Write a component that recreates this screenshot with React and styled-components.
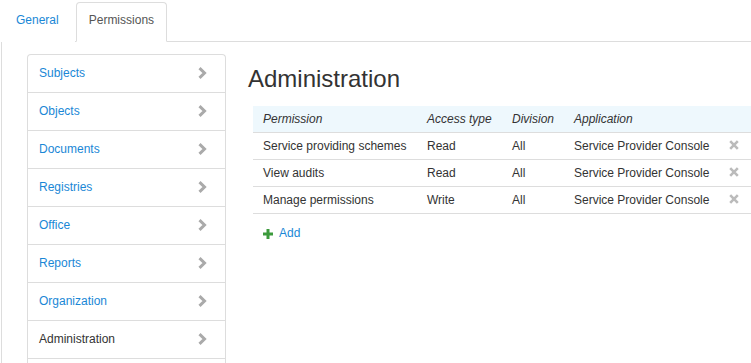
import styled, { createGlobalStyle } from "styled-components";

const GlobalStyle = createGlobalStyle`
  html, body {
    margin: 0;
    padding: 0;
    overflow: hidden;
    background: #ffffff;
  }
  body {
    font-family: "Liberation Sans", Arial, sans-serif;
    font-size: 12px;
    color: #333333;
  }
`;

const Tabs = styled.ul`
  display: flex;
  align-items: flex-end;
  list-style: none;
  margin: 0;
  padding: 2px 0 0 0;
`;

const Tab = styled.li`
  position: relative;
  z-index: 1;
  box-sizing: border-box;
  height: 40px;
  margin-bottom: -1px;
  margin-right: 1px;
  padding: 9px ${(p) => (p.$active ? "12px" : "15px")} 0;
  line-height: 17px;
  color: ${(p) => (p.$active ? "#555555" : "#1a87d6")};
  background: #ffffff;
  border: 1px solid ${(p) => (p.$active ? "#dddddd" : "transparent")};
  border-bottom-color: transparent;
  border-radius: 4px 4px 0 0;
  cursor: pointer;
`;

const Panel = styled.div`
  display: flex;
  align-items: flex-start;
  margin-left: 1px;
  padding: 12px 0 0 25px;
  border-top: 1px solid #dddddd;
  border-left: 1px solid #dddddd;
  min-height: 330px;
`;

const SideNav = styled.ul`
  flex: none;
  width: 199px;
  box-sizing: border-box;
  list-style: none;
  margin: 0;
  padding: 0 0 20px 0;
  border: 1px solid #dddddd;
  border-bottom: none;
  border-radius: 4px 4px 0 0;
`;

const SideItem = styled.li`
  box-sizing: border-box;
  display: flex;
  align-items: center;
  justify-content: space-between;
  height: 38px;
  padding: 0 18px 2px 11px;
  border-bottom: 1px solid #dddddd;
  color: ${(p) => (p.$active ? "#333333" : "#1a87d6")};
  cursor: pointer;
`;

const Main = styled.div`
  flex: none;
  padding: 12px 0 0 22px;
`;

const Title = styled.h2`
  margin: 0 0 14px 0;
  font-size: 24px;
  font-weight: normal;
  line-height: 26px;
  color: #333333;
`;

const Table = styled.table`
  width: 520px;
  margin-left: 5px;
  border-collapse: collapse;
  table-layout: fixed;
`;

const HeadCell = styled.th`
  height: 26px;
  padding: 0 0 0 10px;
  text-align: left;
  font-style: italic;
  font-weight: normal;
  background: #eef8fd;
  border-bottom: 1px solid #dddddd;
`;

const Cell = styled.td`
  height: 26px;
  padding: 0 0 0 10px;
  white-space: nowrap;
  border-bottom: 1px solid #dddddd;
`;

const AddLink = styled.a`
  display: inline-flex;
  align-items: center;
  gap: 6px;
  margin: 11px 0 0 15px;
  line-height: 17px;
  color: #1a87d6;
  text-decoration: none;
  cursor: pointer;
`;

const Chevron = () => (
  <svg width="9" height="12" viewBox="0 0 9 12">
    <polyline points="1.5,1.2 6.5,6 1.5,10.8" fill="none" stroke="#aaaaaa" strokeWidth="3" />
  </svg>
);

const RemoveIcon = () => (
  <svg width="10" height="10" viewBox="0 0 10 10">
    <path d="M1.2 1.2 L8.8 8.8 M8.8 1.2 L1.2 8.8" stroke="#bbbbbb" strokeWidth="2.6" />
  </svg>
);

const PlusIcon = () => (
  <svg width="10" height="10" viewBox="0 0 10 10">
    <path d="M5 0 V10 M0 5 H10" stroke="#3c9a3c" strokeWidth="3" />
  </svg>
);

const sections = [
  "Subjects",
  "Objects",
  "Documents",
  "Registries",
  "Office",
  "Reports",
  "Organization",
  "Administration",
];

const permissions = [
  { name: "Service providing schemes", access: "Read", division: "All", app: "Service Provider Console" },
  { name: "View audits", access: "Read", division: "All", app: "Service Provider Console" },
  { name: "Manage permissions", access: "Write", division: "All", app: "Service Provider Console" },
];

const App = () => {
  return (
    <>
      <GlobalStyle />
      <Tabs>
        <Tab>General</Tab>
        <Tab $active>Permissions</Tab>
      </Tabs>
      <Panel>
        <SideNav>
          {sections.map((s) => (
            <SideItem key={s} $active={s === "Administration"}>
              {s}
              <Chevron />
            </SideItem>
          ))}
        </SideNav>
        <Main>
          <Title>Administration</Title>
          <Table>
            <colgroup>
              <col style={{ width: 164 }} />
              <col style={{ width: 85 }} />
              <col style={{ width: 62 }} />
              <col style={{ width: 155 }} />
              <col />
            </colgroup>
            <thead>
              <tr>
                <HeadCell>Permission</HeadCell>
                <HeadCell>Access type</HeadCell>
                <HeadCell>Division</HeadCell>
                <HeadCell>Application</HeadCell>
                <HeadCell />
              </tr>
            </thead>
            <tbody>
              {permissions.map((p) => (
                <tr key={p.name}>
                  <Cell>{p.name}</Cell>
                  <Cell>{p.access}</Cell>
                  <Cell>{p.division}</Cell>
                  <Cell>{p.app}</Cell>
                  <Cell>
                    <RemoveIcon />
                  </Cell>
                </tr>
              ))}
            </tbody>
          </Table>
          <AddLink>
            <PlusIcon />
            Add
          </AddLink>
        </Main>
      </Panel>
    </>
  );
};

export default App;
